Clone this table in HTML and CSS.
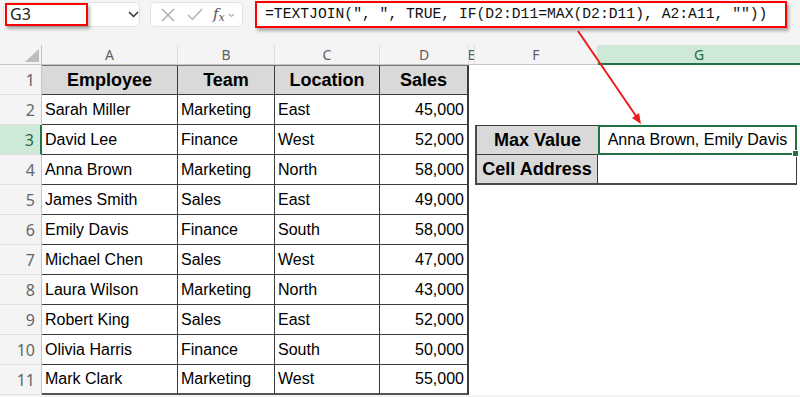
FILE: index.html
```html
<!DOCTYPE html>
<html lang="en">
<head>
    <meta charset="UTF-8">
    <title>TEXTJOIN max value</title>
    <link rel="stylesheet" href="styles.css">
</head>
<body>
    <div class="topbar">
        <div class="namebox">
            <div class="name-ref">G3</div>
            <svg class="chevron" width="11" height="7" viewBox="0 0 11 7"><polyline points="1,1 5.5,5.5 10,1" /></svg>
        </div>
        <div class="fx-tools">
            <svg class="tool" width="14" height="14" viewBox="0 0 14 14"><line x1="1" y1="1" x2="13" y2="13" /><line x1="13" y1="1" x2="1" y2="13" /></svg>
            <svg class="tool" width="16" height="13" viewBox="0 0 16 13"><polyline points="1,7 5.5,11.5 15,1" /></svg>
            <span class="fx">f<sub>x</sub></span>
            <svg class="tool small" width="7" height="5" viewBox="0 0 7 5"><polyline points="1,1 3.5,3.5 6,1" /></svg>
        </div>
        <div class="formula">=TEXTJOIN(", ", TRUE, IF(D2:D11=MAX(D2:D11), A2:A11, ""))</div>
    </div>

    <div class="sheet">
        <div class="corner"><span class="corner-mark"></span></div>
        <div class="col-head">A</div>
        <div class="col-head">B</div>
        <div class="col-head">C</div>
        <div class="col-head">D</div>
        <div class="col-head">E</div>
        <div class="col-head">F</div>
        <div class="col-head active">G</div>

        <div class="row-head">1</div>
        <div class="cell th first">Employee</div>
        <div class="cell th first">Team</div>
        <div class="cell th first">Location</div>
        <div class="cell th first last-col">Sales</div>

        <div class="row-head">2</div>
        <div class="cell">Sarah Miller</div>
        <div class="cell">Marketing</div>
        <div class="cell">East</div>
        <div class="cell num last-col">45,000</div>

        <div class="row-head active">3</div>
        <div class="cell">David Lee</div>
        <div class="cell">Finance</div>
        <div class="cell">West</div>
        <div class="cell num last-col">52,000</div>

        <div class="row-head">4</div>
        <div class="cell">Anna Brown</div>
        <div class="cell">Marketing</div>
        <div class="cell">North</div>
        <div class="cell num last-col">58,000</div>

        <div class="row-head">5</div>
        <div class="cell">James Smith</div>
        <div class="cell">Sales</div>
        <div class="cell">East</div>
        <div class="cell num last-col">49,000</div>

        <div class="row-head">6</div>
        <div class="cell">Emily Davis</div>
        <div class="cell">Finance</div>
        <div class="cell">South</div>
        <div class="cell num last-col">58,000</div>

        <div class="row-head">7</div>
        <div class="cell">Michael Chen</div>
        <div class="cell">Sales</div>
        <div class="cell">West</div>
        <div class="cell num last-col">47,000</div>

        <div class="row-head">8</div>
        <div class="cell">Laura Wilson</div>
        <div class="cell">Marketing</div>
        <div class="cell">North</div>
        <div class="cell num last-col">43,000</div>

        <div class="row-head">9</div>
        <div class="cell">Robert King</div>
        <div class="cell">Sales</div>
        <div class="cell">East</div>
        <div class="cell num last-col">52,000</div>

        <div class="row-head">10</div>
        <div class="cell">Olivia Harris</div>
        <div class="cell">Finance</div>
        <div class="cell">South</div>
        <div class="cell num last-col">50,000</div>

        <div class="row-head">11</div>
        <div class="cell last-row">Mark Clark</div>
        <div class="cell last-row">Marketing</div>
        <div class="cell last-row">West</div>
        <div class="cell num last-col last-row">55,000</div>

        <!-- lookup table in F3:G4 -->
        <div class="label max-label">Max Value</div>
        <div class="result selected">Anna Brown, Emily Davis<span class="fill-handle"></span></div>
        <div class="label addr-label">Cell Address</div>
        <div class="result addr-result"></div>
    </div>

    <svg class="arrow" width="800" height="397" viewBox="0 0 800 397">
        <line x1="578" y1="31" x2="636" y2="116" />
        <polygon points="641,124 632,118 639,113" />
    </svg>
</body>
</html>
```

FILE: styles.css
```css
/* page */
body {
    margin: 0;
    background: #f4f4f4;
    font-family: "Liberation Sans", Arial, sans-serif;
    color: #000;
    width: 800px;
    height: 397px;
    overflow: hidden;
    position: relative;
}

/* formula bar row */
.topbar {
    display: flex;
    align-items: flex-start;
    height: 29px;
    margin-bottom: 16px;
}

.namebox {
    display: flex;
    align-items: center;
    box-sizing: border-box;
    width: 137px;
    height: 25px;
    margin: 2px 0 0 3px;
    padding: 0 0 0 1px;
    background: #fff;
    border: 1px solid #e2e2e2;
    border-radius: 5px;
}

.name-ref {
    box-sizing: border-box;
    width: 83px;
    height: 23px;
    border: 2px solid #ff0000;
    box-shadow: 2px 3px 3px rgba(0, 0, 0, 0.3);
    padding: 0 0 0 3px;
    font-family: "Noto Sans", sans-serif;
    font-size: 16px;
    line-height: 18px;
    color: #222;
}

.chevron {
    margin-left: 40px;
    fill: none;
    stroke: #333;
    stroke-width: 1.5;
}

.fx-tools {
    display: flex;
    align-items: center;
    box-sizing: border-box;
    width: 93px;
    height: 25px;
    margin: 2px 0 0 10px;
    padding-left: 10px;
    background: #fff;
    border: 1px solid #e2e2e2;
    border-radius: 5px;
}

.tool {
    fill: none;
    stroke: #a8a8a8;
    stroke-width: 1.2;
    margin-right: 12px;
}

.tool.small {
    margin: 2px 0 0 3px;
    stroke: #b0b0b0;
}

.fx {
    font-family: "DejaVu Serif", serif;
    font-style: italic;
    font-size: 15px;
    color: #555;
    margin-left: -2px;
}

.fx sub {
    font-size: 11px;
    vertical-align: -2px;
}

.formula {
    box-sizing: border-box;
    width: 532px;
    height: 27px;
    margin: 1px 0 0 12px;
    padding-left: 8px;
    background: #fff;
    border: 2px solid #ff0000;
    box-shadow: 2px 3px 3px rgba(0, 0, 0, 0.3);
    font-family: "Liberation Mono", monospace;
    font-size: 14.7px;
    line-height: 23px;
    color: #111;
    white-space: pre;
}

/* worksheet grid */
.sheet {
    display: grid;
    grid-template-columns: 42px 136px 97px 105px 89px 6px 123px 1fr;
    grid-template-rows: 20px repeat(11, 30px);
    background: #fff;
}

.corner {
    position: relative;
    background: #f4f4f4;
    border-right: 1px solid #c6c6c6;
    border-bottom: 1px solid #c6c6c6;
}

.corner-mark {
    position: absolute;
    right: 2px;
    bottom: 2px;
    width: 0;
    height: 0;
    border-left: 14px solid transparent;
    border-bottom: 13px solid #bdbdbd;
}

.col-head {
    display: flex;
    align-items: center;
    justify-content: center;
    background: #f4f4f4;
    border-right: 1px solid #dcdcdc;
    border-bottom: 1px solid #c6c6c6;
    font-family: "Noto Sans", sans-serif;
    font-size: 14px;
    color: #5f5f5f;
    overflow: hidden;
}

.col-head.active {
    background: #cfe9d8;
    border-bottom: 2px solid #217346;
    color: #1e6b3e;
    border-right: none;
}

.row-head {
    grid-column: 1;
    display: flex;
    align-items: center;
    justify-content: flex-end;
    padding-right: 6px;
    background: #f4f4f4;
    border-right: 1px solid #c6c6c6;
    border-bottom: 1px solid #e0e0e0;
    font-family: "Noto Sans", sans-serif;
    font-size: 16px;
    color: #666;
}

.row-head.active {
    background: #cfe9d8;
    border-right: 2px solid #217346;
    color: #1e6b3e;
}

.cell {
    display: flex;
    align-items: center;
    padding: 0 3px;
    border-right: 1px solid #3c3c3c;
    border-bottom: 1px solid #3c3c3c;
    font-size: 16px;
    white-space: nowrap;
}

.cell.th {
    justify-content: center;
    background: #d9d9d9;
    font-weight: bold;
    font-size: 18px;
}

.cell.first {
    border-top: 1px solid #777;
}

.cell.num {
    justify-content: flex-end;
}

.cell.last-col {
    border-right: 2px solid #3c3c3c;
}

.cell.last-row {
    border-bottom: 2px solid #555;
}

/* F3:G4 */
.label {
    grid-column: 7;
    display: flex;
    align-items: center;
    justify-content: center;
    background: #d9d9d9;
    border-left: 2px solid #4a4a4a;
    border-bottom: 1px solid #3c3c3c;
    font-weight: bold;
    font-size: 18px;
    white-space: nowrap;
}

.max-label {
    grid-row: 4;
    border-top: 1px solid #3c3c3c;
}

.addr-label {
    grid-row: 5;
    border-bottom: 2px solid #4a4a4a;
    border-right: 1px solid #3c3c3c;
}

.result {
    grid-column: 8;
    margin-right: 3px;
    display: flex;
    align-items: center;
    justify-content: center;
    font-size: 16px;
    white-space: nowrap;
}

.selected {
    grid-row: 4;
    position: relative;
    border: 2px solid #217346;
}

.fill-handle {
    position: absolute;
    right: -4px;
    bottom: -4px;
    width: 5px;
    height: 5px;
    background: #217346;
    border: 1px solid #fff;
}

.addr-result {
    grid-row: 5;
    border-right: 1px solid #3c3c3c;
    border-bottom: 2px solid #4a4a4a;
}

/* callout arrow */
.arrow {
    position: absolute;
    top: 0;
    left: 0;
    pointer-events: none;
}

.arrow line {
    stroke: #ee1c1c;
    stroke-width: 2;
}

.arrow polygon {
    fill: #ee1c1c;
}
```
